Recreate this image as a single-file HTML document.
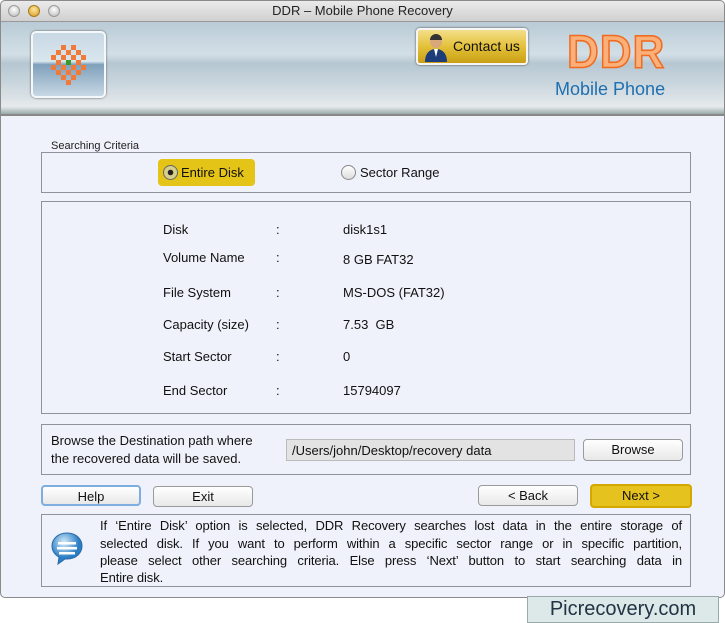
<!DOCTYPE html>
<html><head><style>
*{margin:0;padding:0;box-sizing:border-box}
body{width:725px;height:623px;background:#fff;font-family:"Liberation Sans",sans-serif;position:relative;overflow:hidden;font-size:13px;color:#111}
.win{position:absolute;left:0;top:0;width:725px;height:598px;border-radius:5px;background:#eff2fa;overflow:hidden}
.frame{position:absolute;left:0;top:0;width:725px;height:598px;border:1px solid #8a8a8a;border-radius:5px;pointer-events:none}
.title{position:absolute;left:0;top:0;width:100%;height:22px;background:linear-gradient(#ececec,#d0d0d0);border-bottom:1px solid #999;text-align:center;font-size:13px;line-height:22px;color:#222}
.dot{position:absolute;top:5px;width:12px;height:12px;border-radius:50%;background:radial-gradient(circle at 50% 35%,#fff,#b8b8b8);border:1px solid #999}
.hdr{position:absolute;left:0;top:22px;width:100%;height:94px;background:linear-gradient(180deg,#b9cbd6 0%,#d3dfe6 35%,#b6c7d2 45%,#cdd8df 70%,#e6eaec 92%,#9aa 100%);border-bottom:2px solid #888}
.abs{position:absolute}
.box{position:absolute;border:1px solid #8f9399}
.btn{position:absolute;height:21px;border:1px solid #9a9a9a;border-radius:4px;background:linear-gradient(#fff,#e8e8e8);text-align:center;line-height:19px;font-size:13px}
.row{position:absolute;font-size:13px}
.jl{position:absolute;left:100px;width:582px;text-align:justify;text-align-last:justify;font-size:13px;white-space:nowrap;letter-spacing:-0.1px}
</style></head><body>
<div class="win">
<div class="title"><span class="dot" style="left:8px"></span><span class="dot" style="left:28px;background:radial-gradient(circle at 50% 35%,#fde6a0,#d89a1a);border-color:#a77a20"></span><span class="dot" style="left:48px"></span>DDR – Mobile Phone Recovery</div>
<div class="hdr">
 <div class="abs" style="left:31px;top:9px;width:75px;height:67px;border:2px solid #f4f8fa;border-radius:5px;background:linear-gradient(#c8d8e4 0%,#d9e6ee 45%,#7fa0bb 50%,#c8d8e4 100%);box-shadow:0 0 2px #555">
  <svg width="70" height="62" viewBox="0 0 70 62"><g fill="#f07a3a">
  <rect x="28" y="12" width="5" height="5"/><rect x="38" y="12" width="5" height="5"/><rect x="23" y="17" width="5" height="5"/><rect x="33" y="17" width="5" height="5"/><rect x="43" y="17" width="5" height="5"/><rect x="18" y="22" width="5" height="5"/><rect x="28" y="22" width="5" height="5"/><rect x="38" y="22" width="5" height="5"/><rect x="48" y="22" width="5" height="5"/><rect x="23" y="27" width="5" height="5"/><rect x="43" y="27" width="5" height="5"/><rect x="18" y="32" width="5" height="5"/><rect x="28" y="32" width="5" height="5"/><rect x="38" y="32" width="5" height="5"/><rect x="48" y="32" width="5" height="5"/><rect x="23" y="37" width="5" height="5"/><rect x="33" y="37" width="5" height="5"/><rect x="43" y="37" width="5" height="5"/><rect x="28" y="42" width="5" height="5"/><rect x="38" y="42" width="5" height="5"/><rect x="33" y="47" width="5" height="5"/></g><rect x="33" y="27" width="5" height="5" fill="#3a9a2a"/></svg>
 </div>
 <div class="abs" style="left:416px;top:6px;width:112px;height:37px;border:2px solid #f5f5f5;border-radius:4px;background:linear-gradient(#f3df8a,#e4c13a 50%,#c9a014);box-shadow:0 0 2px #444;font-size:14px;line-height:33px;padding-left:35px;color:#111">Contact us
  <svg class="abs" style="left:6px;top:4px" width="24" height="28" viewBox="0 0 24 28"><circle cx="12" cy="8" r="6" fill="#d9a77a"/><path d="M6 6a6 6 0 0 1 12 0z" fill="#333"/><path d="M1 28c0-9 5-13 11-13s11 4 11 13z" fill="#1d3c7a"/><path d="M10 15l2 8 2-8z" fill="#fff"/></svg>
 </div>
 <div class="abs" style="left:567px;top:6px;font-size:44px;font-weight:bold;-webkit-text-stroke:1.5px #f06a20;color:#fbb07a;letter-spacing:1px;transform:scaleY(1.05)">DDR</div>
 <div class="abs" style="left:555px;top:57px;font-size:18px;color:#1e6fb0">Mobile Phone</div>
</div>

<div class="box" style="left:41px;top:152px;width:650px;height:41px"></div>
<div class="abs" style="left:48px;top:140px;padding:0 3px;background:#eff2fa;font-size:11px;color:#222">Searching Criteria</div>
<div class="abs" style="left:158px;top:159px;width:97px;height:27px;background:#e5c418;border-radius:4px"></div>
<div class="abs" style="left:163px;top:165px;width:15px;height:15px;border-radius:50%;border:1px solid #666;background:radial-gradient(#222 0 2.5px,#d8d08a 3px)"></div>
<div class="abs" style="left:181px;top:165px">Entire Disk</div>
<div class="abs" style="left:341px;top:165px;width:15px;height:15px;border-radius:50%;border:1px solid #888;background:linear-gradient(#fff,#ddd)"></div>
<div class="abs" style="left:360px;top:165px">Sector Range</div>

<div class="box" style="left:41px;top:201px;width:650px;height:213px"></div>
<div class="row" style="left:163px;top:222px">Disk</div><div class="row" style="left:276px;top:222px">:</div><div class="row" style="left:343px;top:222px">disk1s1</div>
<div class="row" style="left:163px;top:250px">Volume Name</div><div class="row" style="left:276px;top:250px">:</div><div class="row" style="left:343px;top:252px">8 GB FAT32</div>
<div class="row" style="left:163px;top:285px">File System</div><div class="row" style="left:276px;top:285px">:</div><div class="row" style="left:343px;top:285px">MS-DOS (FAT32)</div>
<div class="row" style="left:163px;top:317px">Capacity (size)</div><div class="row" style="left:276px;top:317px">:</div><div class="row" style="left:343px;top:317px">7.53&nbsp; GB</div>
<div class="row" style="left:163px;top:349px">Start Sector</div><div class="row" style="left:276px;top:349px">:</div><div class="row" style="left:343px;top:349px">0</div>
<div class="row" style="left:163px;top:383px">End Sector</div><div class="row" style="left:276px;top:383px">:</div><div class="row" style="left:343px;top:383px">15794097</div>

<div class="box" style="left:41px;top:424px;width:650px;height:51px"></div>
<div class="row" style="left:51px;top:432px;line-height:18px">Browse the Destination path where<br>the recovered data will be saved.</div>
<div class="abs" style="left:286px;top:439px;width:289px;height:22px;background:#e3e3e3;border:1px solid #bbb;padding-left:5px;line-height:21px">/Users/john/Desktop/recovery data</div>
<div class="btn" style="left:583px;top:439px;width:100px;height:22px">Browse</div>

<div class="btn" style="left:41px;top:485px;width:100px;border:2px solid #7eaee0">Help</div>
<div class="btn" style="left:153px;top:486px;width:100px">Exit</div>
<div class="btn" style="left:478px;top:485px;width:100px">&lt; Back</div>
<div class="btn" style="left:590px;top:484px;width:102px;height:24px;background:#e6c21e;border:2px solid #d4a800;line-height:20px">Next &gt;</div>

<div class="box" style="left:41px;top:514px;width:650px;height:73px"></div>
<svg class="abs" style="left:49px;top:530px" width="36" height="36" viewBox="0 0 36 36"><defs><radialGradient id="g" cx="40%" cy="30%"><stop offset="0" stop-color="#d6ecfb"/><stop offset="1" stop-color="#2a7ec4"/></radialGradient></defs><path d="M18 3C9 3 3 9 3 16c0 5 3 9 7 11l-1 7 7-5c1 0 2 0 2 0 9 0 15-6 15-13S27 3 18 3z" fill="url(#g)" stroke="#2a6aa8"/><rect x="9" y="12" width="18" height="2.5" fill="#fff"/><rect x="8" y="17" width="20" height="2.5" fill="#fff"/><rect x="10" y="22" width="16" height="2.5" fill="#fff"/></svg>
<div class="jl" style="top:518px">If ‘Entire Disk’ option is selected, DDR Recovery searches lost data in the entire storage of</div>
<div class="jl" style="top:536px">selected disk. If you want to perform within a specific sector range or in specific partition,</div>
<div class="jl" style="top:553px">please select other searching criteria. Else press ‘Next’ button to start searching data in</div>
<div class="jl" style="top:570px;text-align-last:left">Entire disk.</div>
</div>
<div class="frame"></div>
<div class="abs" style="left:527px;top:596px;width:192px;height:27px;background:#dde8e8;border:1px solid #9aa;font-size:20px;line-height:25px;text-align:center;color:#234">Picrecovery.com</div>
</body></html>
